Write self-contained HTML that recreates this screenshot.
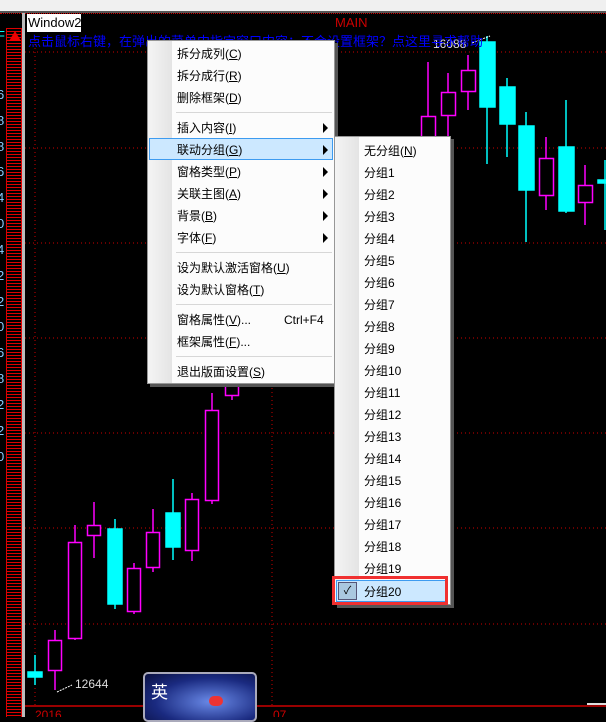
<!DOCTYPE html>
<html><head><meta charset="utf-8"><style>
*{margin:0;padding:0;box-sizing:border-box}
body{width:606px;height:717px;background:#000;position:relative;overflow:hidden;font-family:"Liberation Sans","Noto Sans CJK SC",sans-serif;font-size:12px}
.abs{position:absolute}
.menu{position:absolute;background:#fcfcfc;border:1px solid #979797;box-shadow:3px 3px 0 #555}
.gut{position:absolute;left:0;top:0;bottom:0;width:24px;background:linear-gradient(90deg,#f4f4f4,#e4e4e4)}
.it{position:absolute;left:29px;height:22px;line-height:22px;color:#000;font-size:12px;white-space:nowrap}
.sep{position:absolute;left:28px;right:2px;height:1px;background:#d7d7d7}
.arr{position:absolute;right:6px;width:0;height:0;border-left:5px solid #000;border-top:5px solid transparent;border-bottom:5px solid transparent}
u{text-decoration:underline}
</style></head><body>
<div class="abs" style="left:0;top:0;width:606px;height:11px;background:#f0f0f0"></div>
<div class="abs" style="left:0;top:11px;width:606px;height:2px;background:#555"></div>
<div class="abs" style="left:0;top:13px;width:606px;height:0;border-top:1px dotted #c00"></div>
<!-- ruler -->
<div class="abs" style="left:6px;top:28px;width:16px;height:689px;background:repeating-linear-gradient(180deg,#d00 0 1px,#000 1px 3px);border-left:1px solid #d00;border-right:1px solid #d00"></div>
<div class="abs" style="left:9px;top:31px;width:0;height:0;border-left:6px solid transparent;border-right:6px solid transparent;border-bottom:10px solid #e00"></div>
<div class="abs" style="left:22px;top:13px;width:3px;height:704px;background:#bbb"></div>
<div class="abs" style="left:-3px;top:28px;color:#0ff;font-size:13px">F</div>
<svg class="abs" style="left:0;top:0" width="606" height="717">
<g fill="#8cf" font-size="13" font-family="Liberation Sans">
<text x="-3" y="99">6</text><text x="-3" y="125">8</text><text x="-3" y="151">8</text><text x="-3" y="176">6</text><text x="-3" y="202">4</text><text x="-3" y="228">0</text><text x="-3" y="254">4</text><text x="-3" y="280">2</text><text x="-3" y="306">2</text><text x="-3" y="331">0</text><text x="-3" y="357">6</text><text x="-3" y="383">8</text><text x="-3" y="409">2</text><text x="-3" y="435">2</text><text x="-3" y="461">0</text>
</g>
<g stroke="#c00" stroke-dasharray="1 3">
<line x1="25" y1="52" x2="606" y2="52"/><line x1="25" y1="148" x2="606" y2="148"/><line x1="25" y1="243" x2="606" y2="243"/><line x1="25" y1="338" x2="606" y2="338"/><line x1="25" y1="433" x2="606" y2="433"/><line x1="25" y1="528" x2="606" y2="528"/><line x1="25" y1="624" x2="606" y2="624"/>
<line x1="35" y1="40" x2="35" y2="706"/><line x1="272" y1="40" x2="272" y2="706"/>
</g>
<line x1="25" y1="706" x2="606" y2="706" stroke="#c00" stroke-width="1.5"/>
<g fill="#c00" font-size="12"><text x="35" y="719">2016</text><text x="273" y="719">07</text></g>
<line x1="587" y1="704" x2="606" y2="704" stroke="#ddd" stroke-width="2"/>
<g stroke-width="1.5">
<!-- wicks and bodies: cyan filled -->
<g stroke="#0ff" fill="#0ff">
<line x1="35" y1="655" x2="35" y2="685"/><rect x="28" y="672" width="14" height="5"/>
<line x1="115" y1="519" x2="115" y2="609"/><rect x="108" y="529" width="14" height="75"/>
<line x1="173" y1="479" x2="173" y2="560"/><rect x="166" y="513" width="14" height="34"/>
<line x1="487" y1="36" x2="487" y2="164"/><rect x="480" y="42" width="15" height="65"/>
<line x1="507" y1="78" x2="507" y2="157"/><rect x="500" y="87" width="15" height="37"/>
<line x1="526" y1="112" x2="526" y2="242"/><rect x="519" y="126" width="15" height="64"/>
<line x1="566" y1="100" x2="566" y2="213"/><rect x="559" y="147" width="15" height="64"/>
<rect x="598" y="180" width="8" height="3"/><line x1="605" y1="160" x2="605" y2="230"/>
</g>
<g stroke="#f0f" fill="none">
<line x1="55" y1="630" x2="55" y2="690"/><rect x="48.5" y="640.5" width="13" height="30" fill="#000"/>
<line x1="75" y1="525" x2="75" y2="640"/><rect x="68.5" y="542.5" width="13" height="96" fill="#000"/>
<line x1="94" y1="502" x2="94" y2="558"/><rect x="87.5" y="525.5" width="13" height="10" fill="#000"/>
<line x1="134" y1="563" x2="134" y2="614"/><rect x="127.5" y="568.5" width="13" height="43" fill="#000"/>
<line x1="153" y1="509" x2="153" y2="572"/><rect x="146.5" y="532.5" width="13" height="35" fill="#000"/>
<line x1="192" y1="493" x2="192" y2="561"/><rect x="185.5" y="499.5" width="13" height="51" fill="#000"/>
<line x1="212" y1="393" x2="212" y2="504"/><rect x="205.5" y="410.5" width="13" height="90" fill="#000"/>
<line x1="232" y1="372" x2="232" y2="400"/><rect x="225.5" y="380.5" width="13" height="15" fill="#000"/>
<line x1="428" y1="62" x2="428" y2="140"/><rect x="421.5" y="116.5" width="14" height="30" fill="#000"/>
<line x1="448" y1="73" x2="448" y2="140"/><rect x="441.5" y="92.5" width="14" height="23" fill="#000"/>
<line x1="468" y1="55" x2="468" y2="110"/><rect x="461.5" y="70.5" width="14" height="21" fill="#000"/>
<line x1="546" y1="137" x2="546" y2="210"/><rect x="539.5" y="158.5" width="14" height="37" fill="#000"/>
<line x1="585" y1="165" x2="585" y2="225"/><rect x="578.5" y="185.5" width="14" height="17" fill="#000"/>
</g>
</g>
<line x1="472" y1="43" x2="490" y2="36" stroke="#fff" stroke-dasharray="2 1"/>
<line x1="57" y1="692" x2="72" y2="685" stroke="#fff" stroke-dasharray="2 1"/>
<g fill="#ddd" font-size="12" font-family="Liberation Sans"><text x="433" y="48">16088</text><text x="75" y="688">12644</text></g>
</svg>
<div class="abs" style="left:27px;top:14px;width:54px;height:18px;background:#fff;color:#000;font-size:13px;line-height:18px;padding-left:1px">Window2</div>
<div class="abs" style="left:335px;top:15px;color:#c00;font-size:13px">MAIN</div>
<div class="abs" style="left:28px;top:31px;color:#00f;font-size:13px;white-space:nowrap">点击鼠标右键，在弹出的菜单中指定窗口内容；不会设置框架？点这里寻求帮助</div>
<!-- popup -->
<div class="abs" style="left:143px;top:672px;width:114px;height:50px;border:2px solid #aab;border-radius:5px;background:radial-gradient(ellipse at 60% 60%,#6a8ae8,#1a2a80 60%,#0a1040);">
<div style="position:absolute;left:6px;top:4px;color:#fff;font-size:17px">英</div>
<div style="position:absolute;left:64px;top:22px;width:14px;height:10px;background:#e33;border-radius:5px"></div>
</div>
<!-- main menu -->
<div class="menu" style="left:147px;top:40px;width:188px;height:344px">
<div class="gut"></div>
<div class="it" style="top:2px">拆分成列(<u>C</u>)</div>
<div class="it" style="top:24px">拆分成行(<u>R</u>)</div>
<div class="it" style="top:46px">删除框架(<u>D</u>)</div>
<div class="sep" style="top:71px"></div>
<div class="it" style="top:76px">插入内容(<u>I</u>)</div><div class="arr" style="top:82px"></div>
<div style="position:absolute;left:1px;top:97px;width:184px;height:22px;background:#cce8ff;border:1px solid #3d9bf0"></div>
<div class="it" style="top:98px">联动分组(<u>G</u>)</div><div class="arr" style="top:104px"></div>
<div class="it" style="top:120px">窗格类型(<u>P</u>)</div><div class="arr" style="top:126px"></div>
<div class="it" style="top:142px">关联主图(<u>A</u>)</div><div class="arr" style="top:148px"></div>
<div class="it" style="top:164px">背景(<u>B</u>)</div><div class="arr" style="top:170px"></div>
<div class="it" style="top:186px">字体(<u>F</u>)</div><div class="arr" style="top:192px"></div>
<div class="sep" style="top:211px"></div>
<div class="it" style="top:216px">设为默认激活窗格(<u>U</u>)</div>
<div class="it" style="top:238px">设为默认窗格(<u>T</u>)</div>
<div class="sep" style="top:263px"></div>
<div class="it" style="top:268px">窗格属性(<u>V</u>)...</div><div class="it" style="top:268px;left:136px">Ctrl+F4</div>
<div class="it" style="top:290px">框架属性(<u>F</u>)...</div>
<div class="sep" style="top:315px"></div>
<div class="it" style="top:320px">退出版面设置(<u>S</u>)</div>
</div>
<!-- submenu -->
<div class="menu" style="left:334px;top:136px;width:117px;height:469px">
<div class="gut"></div>
<div class="it" style="top:3px">无分组(<u>N</u>)</div>
<div class="it" style="top:25px">分组1</div><div class="it" style="top:47px">分组2</div><div class="it" style="top:69px">分组3</div><div class="it" style="top:91px">分组4</div><div class="it" style="top:113px">分组5</div><div class="it" style="top:135px">分组6</div><div class="it" style="top:157px">分组7</div><div class="it" style="top:179px">分组8</div><div class="it" style="top:201px">分组9</div><div class="it" style="top:223px">分组10</div><div class="it" style="top:245px">分组11</div><div class="it" style="top:267px">分组12</div><div class="it" style="top:289px">分组13</div><div class="it" style="top:311px">分组14</div><div class="it" style="top:333px">分组15</div><div class="it" style="top:355px">分组16</div><div class="it" style="top:377px">分组17</div><div class="it" style="top:399px">分组18</div><div class="it" style="top:421px">分组19</div>
<div style="position:absolute;left:1px;top:443px;width:110px;height:22px;background:#cce8ff;border:1px solid #3d9bf0"></div>
<div style="position:absolute;left:3px;top:445px;width:19px;height:18px;background:#aac8e0;border:1px solid #557;color:#000;font-size:11px;text-align:center;line-height:16px">✓</div>
<div class="it" style="top:444px">分组20</div>
</div>
<div class="abs" style="left:332px;top:576px;width:116px;height:29px;border:3px solid #f03030"></div>
</body></html>
